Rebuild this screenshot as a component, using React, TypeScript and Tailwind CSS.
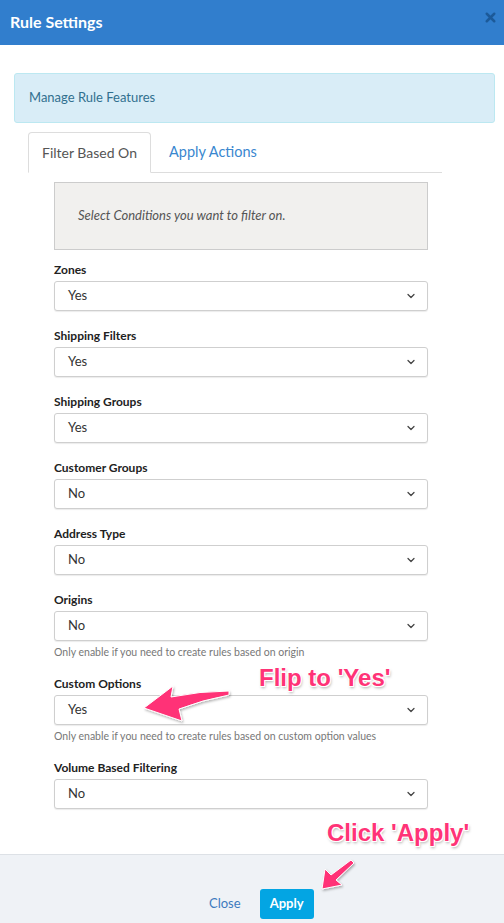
import { ChevronDown, X } from 'lucide-react';

type Field = { label: string; value: string; help?: string };

const fields: Field[] = [
  { label: 'Zones', value: 'Yes' },
  { label: 'Shipping Filters', value: 'Yes' },
  { label: 'Shipping Groups', value: 'Yes' },
  { label: 'Customer Groups', value: 'No' },
  { label: 'Address Type', value: 'No' },
  { label: 'Origins', value: 'No', help: 'Only enable if you need to create rules based on origin' },
  { label: 'Custom Options', value: 'Yes', help: 'Only enable if you need to create rules based on custom option values' },
  { label: 'Volume Based Filtering', value: 'No' },
];

function SelectField({ field }: { field: Field }) {
  return (
    <div className="mb-[17px]">
      <div className="text-[12px] leading-[16px] font-bold text-[#222] mb-[3px]">{field.label}</div>
      <div className="h-[30px] border border-[#cfcfcf] rounded-[3px] shadow-[0_1px_1px_rgba(0,0,0,0.08)] bg-white flex items-center justify-between pl-[13px] pr-[10px]">
        <span className="text-[13px] text-[#333]">{field.value}</span>
        <ChevronDown className="w-[12px] h-[12px] text-[#444]" strokeWidth={2.5} />
      </div>
      {field.help && (
        <div className="mt-[4px] text-[10.5px] leading-[14px] text-[#777]">{field.help}</div>
      )}
    </div>
  );
}

const annotation =
  'absolute font-bold text-[#ff3377] [font-family:"Liberation_Sans",Arial,sans-serif] [text-shadow:0_0_1px_#fff,1px_1px_0_#fff,-1px_-1px_0_#fff,1px_-1px_0_#fff,-1px_1px_0_#fff,1px_2px_3px_rgba(0,0,0,0.35)] whitespace-nowrap';

export default function App() {
  return (
    <div className="relative w-[504px] h-[923px] bg-white overflow-hidden [font-family:Lato,'Open_Sans',sans-serif]">
      <div className="h-[45px] bg-[#317ecd] flex items-start justify-between pl-[10px] pr-[6px]">
        <h1 className="mt-[10px] text-[16px] font-bold text-white">Rule Settings</h1>
        <X className="mt-[10px] w-[15px] h-[15px] text-[#1c5a99]" strokeWidth={4} />
      </div>

      <div className="pt-[28px] pl-[14px] pr-[9px]">
        <div className="h-[50px] bg-[#d9edf7] border border-[#bce8f1] rounded-[3px] flex items-center pl-[14px]">
          <span className="text-[13px] text-[#31708f]">Manage Rule Features</span>
        </div>
      </div>

      <div className="mt-[9px] ml-[28px] w-[414px] flex border-b border-[#ddd]">
        <div className="h-[41px] px-[13px] flex items-center border border-[#ddd] border-b-white -mb-px rounded-t-[4px] bg-white">
          <span className="text-[14px] text-[#555]">Filter Based On</span>
        </div>
        <div className="h-[40px] px-[18px] flex items-center">
          <span className="text-[14.5px] text-[#3a87cf]">Apply Actions</span>
        </div>
      </div>

      <div className="ml-[54px] w-[374px] mt-[9px]">
        <div className="h-[68px] bg-[#f1f0ee] border border-[#ccc] flex items-center pl-[23px]">
          <span className="text-[13px] italic text-[#555]">Select Conditions you want to filter on.</span>
        </div>
        <div className="pt-[12px]">
          {fields.map((f) => (
            <SelectField key={f.label} field={f} />
          ))}
        </div>
      </div>

      <div className="absolute left-0 right-0 bottom-0 h-[69px] bg-[#eff2f6] border-t border-[#dde1e6] flex items-center pl-[209px] pt-[30px] gap-[19px]">
        <span className="text-[13px] text-[#3d7bbf]">Close</span>
        <div className="h-[30px] w-[54px] bg-[#03a5e3] rounded-[3px] flex items-center justify-center">
          <span className="text-[13px] font-bold text-white">Apply</span>
        </div>
      </div>

      <div className={`${annotation} left-[259px] top-[660px] text-[24px]`}>Flip to 'Yes'</div>
      <div className={`${annotation} left-[327px] top-[815px] text-[24px]`}>Click 'Apply'</div>

      <svg className="absolute left-0 top-0 pointer-events-none" width="504" height="923">
        <defs>
          <filter id="sh" x="-20%" y="-20%" width="140%" height="140%">
            <feDropShadow dx="1" dy="1.5" stdDeviation="1.2" floodColor="#000" floodOpacity="0.3" />
          </filter>
        </defs>
        <path
          d="M144,708 L173,686 L171,697 Q200,691 229,691 L229,695 Q202,700 179,709 L182,721 Z"
          fill="#ff3377"
          stroke="#fff"
          strokeWidth="1"
          filter="url(#sh)"
        />
        <path
          d="M322,889 L325,869 L331,875 L351,860 L354,863 L336,880 L342,885 Z"
          fill="#ff3377"
          stroke="#fff"
          strokeWidth="1"
          filter="url(#sh)"
        />
      </svg>
    </div>
  );
}
